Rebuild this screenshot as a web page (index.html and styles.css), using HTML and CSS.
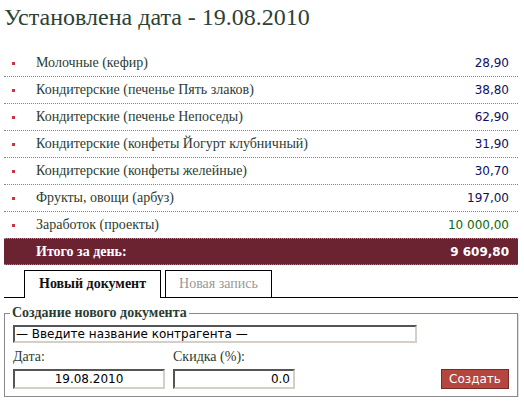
FILE: index.html
```html
<!DOCTYPE html>
<html lang="ru">
  <head>
    <meta charset="UTF-8" />
    <title>Установлена дата - 19.08.2010</title>
    <link rel="stylesheet" href="styles.css">
  </head>
  <body>
    <div class="page">
      <h1 class="day-title">Установлена дата - 19.08.2010</h1>

      <ul class="day-list">
        <li class="day-row">
          <span class="day-name">Молочные (кефир)</span>
          <span class="day-sum">28,90</span>
        </li>
        <li class="day-row">
          <span class="day-name">Кондитерские (печенье Пять злаков)</span>
          <span class="day-sum">38,80</span>
        </li>
        <li class="day-row">
          <span class="day-name">Кондитерские (печенье Непоседы)</span>
          <span class="day-sum">62,90</span>
        </li>
        <li class="day-row">
          <span class="day-name">Кондитерские (конфеты Йогурт клубничный)</span>
          <span class="day-sum">31,90</span>
        </li>
        <li class="day-row">
          <span class="day-name">Кондитерские (конфеты желейные)</span>
          <span class="day-sum">30,70</span>
        </li>
        <li class="day-row">
          <span class="day-name">Фрукты, овощи (арбуз)</span>
          <span class="day-sum">197,00</span>
        </li>
        <li class="day-row">
          <span class="day-name">Заработок (проекты)</span>
          <span class="day-sum income">10 000,00</span>
        </li>
        <li class="day-row total">
          <span class="day-name">Итого за день:</span>
          <span class="day-sum">9 609,80</span>
        </li>
      </ul>

      <div class="tabs">
        <a class="tab active" href="#">Новый документ</a>
        <a class="tab" href="#">Новая запись</a>
      </div>

      <form class="doc-form" onsubmit="return false">
        <fieldset>
          <legend>Создание нового документа</legend>
          <input class="field-name" type="text" value="— Введите название контрагента —" />
          <div class="form-row">
            <label class="field-group">
              Дата:
              <input class="field-date" type="text" value="19.08.2010" />
            </label>
            <label class="field-group">
              Скидка (%):
              <input class="field-discount" type="text" value="0.0" />
            </label>
            <button type="submit">Создать</button>
          </div>
        </fieldset>
      </form>
    </div>
  </body>
</html>
```

FILE: styles.css
```css
body {
  margin: 0;
  background: #ffffff;
  font-family: "Liberation Serif", Georgia, serif;
  color: #2b3d33;
}
.page {
  width: 514px;
  padding: 0 6px 0 4px;
}
.day-title {
  margin: 0;
  padding: 4px 0 0 0;
  height: 42px;
  font-weight: normal;
  font-size: 24px;
  color: #2d4136;
}
.day-list {
  list-style: none;
  margin: 0;
  padding: 0;
}
.day-row {
  display: flex;
  justify-content: space-between;
  align-items: center;
  height: 26px;
  padding: 0 9px 0 32px;
  border-bottom: 1px dotted #888888;
  position: relative;
  font-size: 14px;
}
.day-row::before {
  content: "";
  position: absolute;
  left: 8px;
  top: 12px;
  width: 3px;
  height: 3px;
  background: #cc3344;
}
.day-row:first-child {
  margin-top: 4px;
}
.day-sum {
  font-family: "DejaVu Sans", Verdana, sans-serif;
  font-size: 12px;
  color: #101060;
}
.day-sum.income {
  color: #0a6a0a;
}
.day-row.total {
  background: #6b2231;
  color: #ffffff;
  font-weight: bold;
  border-top: 1px dotted #999999;
  margin-top: -1px;
  height: 25px;
}
.day-row.total::before {
  display: none;
}
.day-row.total .day-sum {
  color: #ffffff;
}
.tabs {
  display: flex;
  gap: 4px;
  margin-top: 5px;
  padding-left: 20px;
  border-bottom: 1px solid #000000;
}
.tab {
  display: block;
  padding: 0 13px;
  height: 26px;
  line-height: 26px;
  border: 1px solid #000000;
  border-bottom: none;
  font-size: 14px;
  text-decoration: none;
  color: #999999;
}
.tab.active {
  font-weight: bold;
  color: #111111;
  background: #ffffff;
  margin-bottom: -1px;
  height: 27px;
  padding: 0 14px;
}
.doc-form fieldset {
  margin: 7px 0 0 0;
  padding: 0 8px 7px 8px;
  border: 1px solid #8a8a8a;
  box-shadow: 1px 1px 0 #e0e0e0;
}
.doc-form legend {
  padding: 0 2px;
  margin-left: -3px;
  font-weight: bold;
  font-size: 14px;
  color: #2b3d33;
}
.doc-form input {
  box-sizing: border-box;
  height: 20px;
  padding: 0 3px;
  border: 2px solid;
  border-color: #555555 #d4d0c8 #d4d0c8 #555555;
  font-family: "DejaVu Sans", Verdana, sans-serif;
  font-size: 12px;
  color: #000000;
  background: #ffffff;
}
.doc-form input.field-name {
  display: block;
  width: 404px;
  height: 18px;
  margin-top: 4px;
  padding: 0 1px;
}
.form-row {
  display: flex;
  align-items: flex-end;
  gap: 8px;
  margin-top: 6px;
}
.field-group {
  display: flex;
  flex-direction: column;
  gap: 4px;
  font-size: 14px;
}
.field-date {
  width: 152px;
  text-align: center;
}
.field-discount {
  width: 122px;
  text-align: right;
}
.doc-form button {
  margin-left: auto;
  height: 20px;
  width: 68px;
  padding: 0;
  background: #b44640;
  border: 1px solid #7a2a26;
  color: #ffffff;
  font-family: "DejaVu Sans", Verdana, sans-serif;
  font-size: 12px;
  cursor: pointer;
}
```
